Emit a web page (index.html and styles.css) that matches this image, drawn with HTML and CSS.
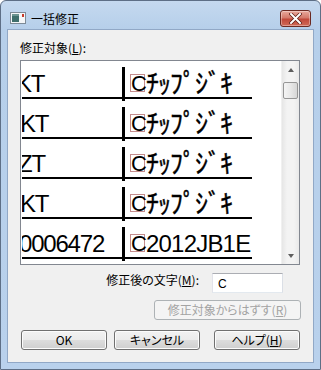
FILE: index.html
```html
<!DOCTYPE html>
<html lang="ja">
<head>
    <meta charset="utf-8">
    <title>一括修正</title>
    <link rel="stylesheet" href="styles.css">
</head>
<body>

<div class="window">
    <div class="titlebar">
        <svg class="app-icon" width="16" height="16" viewBox="0 0 16 16">
            <rect x="0.5" y="2.5" width="15" height="11" fill="#f4f6f8" stroke="#7d8a96"/>
            <rect x="2" y="4" width="7" height="8" fill="#3f6f6c"/>
            <rect x="2" y="4" width="7" height="2" fill="#6d9592"/>
            <rect x="12" y="4" width="2" height="3" fill="#c83a2a"/>
        </svg>
        <span class="title">一括修正</span>
        <button class="close-btn">
            <svg width="13" height="11" viewBox="0 0 13 11">
                <path d="M2 1 L11 10 M11 1 L2 10" stroke="#5a1c14" stroke-width="3.4" stroke-linecap="square"/>
                <path d="M2 1 L11 10 M11 1 L2 10" stroke="#ffffff" stroke-width="2" stroke-linecap="square"/>
            </svg>
        </button>
    </div>

    <div class="client">
        <div class="field-label">修正対象(<u>L</u>):</div>

        <div class="listbox">
            <div class="rows">
                <div class="row">
                    <div class="cell-left"><span class="code shift-lg">KT</span></div>
                    <div class="divider"></div>
                    <div class="cell-right"><span class="mark">C</span><span class="kana">ﾁｯﾌﾟｼﾞｷ</span></div>
                </div>
                <div class="row">
                    <div class="cell-left"><span class="code">KT</span></div>
                    <div class="divider"></div>
                    <div class="cell-right"><span class="mark">C</span><span class="kana">ﾁｯﾌﾟｼﾞｷ</span></div>
                </div>
                <div class="row">
                    <div class="cell-left"><span class="code shift-md">ZT</span></div>
                    <div class="divider"></div>
                    <div class="cell-right"><span class="mark">C</span><span class="kana">ﾁｯﾌﾟｼﾞｷ</span></div>
                </div>
                <div class="row">
                    <div class="cell-left"><span class="code">KT</span></div>
                    <div class="divider"></div>
                    <div class="cell-right"><span class="mark">C</span><span class="kana">ﾁｯﾌﾟｼﾞｷ</span></div>
                </div>
                <div class="row">
                    <div class="cell-left"><span class="code shift-sm">0006472</span></div>
                    <div class="divider"></div>
                    <div class="cell-right"><span class="mark">C</span><span class="latin">2012JB1E</span></div>
                </div>
            </div>
            <div class="scrollbar">
                <div class="sb-btn"><span class="arrow-up"></span></div>
                <div class="sb-thumb"></div>
                <div class="sb-track"></div>
                <div class="sb-btn"><span class="arrow-down"></span></div>
            </div>
        </div>

        <div class="replace-row">
            <label for="newChar">修正後の文字(<u>M</u>):</label>
            <input type="text" id="newChar" value="C">
        </div>

        <div class="remove-row">
            <button class="win-btn remove-btn" disabled>修正対象からはずす(<u>R</u>)</button>
        </div>

        <div class="actions">
            <button class="win-btn">OK</button>
            <button class="win-btn">キャンセル</button>
            <button class="win-btn help-btn">ヘルプ(<u>H</u>)</button>
        </div>
    </div>
</div>

</body>
</html>
```

FILE: styles.css
```css
body {
    margin: 0;
    background: #ffffff;
    font-family: "Noto Sans CJK JP", "Liberation Sans", sans-serif;
    font-size: 12px;
    color: #000;
}

.window {
    width: 321px;
    height: 370px;
    box-sizing: border-box;
    border: 1px solid #5e6f86;
    border-radius: 6px 6px 0 0;
    padding: 0 7px 7px;
    display: flex;
    flex-direction: column;
    background: linear-gradient(to bottom, #c5d9ef 0, #b6cfea 28px, #b9d1ec 100%);
}

/* title bar */
.titlebar {
    height: 29px;
    box-sizing: border-box;
    padding-top: 5px;
    display: flex;
    align-items: center;
}

.app-icon {
    margin-left: 2px;
    flex: none;
}

.title {
    margin-left: 5px;
    flex: 1;
    line-height: 15px;
    color: #000;
}

.close-btn {
    width: 31px;
    height: 17px;
    margin-right: 2px;
    padding: 0;
    border: 1px solid #6b2a22;
    border-radius: 3px;
    background: linear-gradient(to bottom, #e9a99c 0, #d47a6b 45%, #c1493a 55%, #d06a57 100%);
    box-shadow: inset 0 0 0 1px rgba(255, 255, 255, 0.35);
    display: flex;
    align-items: center;
    justify-content: center;
}

/* client area */
.client {
    flex: 1;
    background: #f0f0f0;
    box-shadow: 0 0 0 1px #91a8c6;
    padding: 10px 13px 0 12px;
    display: flex;
    flex-direction: column;
}

.field-label {
    line-height: 15px;
    font-feature-settings: "palt";
}

/* list */
.listbox {
    margin-top: 5px;
    height: 205px;
    box-sizing: border-box;
    border: 1px solid #828790;
    background: #fff;
    display: flex;
    overflow: hidden;
}

.rows {
    flex: 1;
    padding-left: 1px;
    font-family: "Liberation Sans", "Noto Sans CJK JP", sans-serif;
    font-size: 24px;
    line-height: 24px;
    white-space: nowrap;
}

.row {
    height: 40px;
    display: flex;
    align-items: flex-start;
}

.cell-left,
.cell-right {
    height: 38px;
    box-sizing: border-box;
    padding-top: 11px;
    border-bottom: 2px solid #000;
    overflow: hidden;
}

.cell-left {
    width: 100px;
}

.code {
    display: inline-block;
    margin-left: -2px;
    letter-spacing: -1.2px;
}

.shift-sm { margin-left: -3px; }
.shift-md { margin-left: -4px; }
.shift-lg { margin-left: -6px; }

.divider {
    width: 3px;
    height: 34px;
    margin-top: 6px;
    background: #000;
    flex: none;
}

.cell-right {
    width: 127px;
    padding-left: 5px;
}

.mark {
    display: inline-block;
    width: 13px;
    height: 16px;
    margin: 2px 1px 0 0;
    vertical-align: top;
    border: 1px solid #c48c8c;
    font-size: 22px;
    line-height: 17px;
    text-align: center;
}

.kana {
    font-family: "Noto Sans CJK JP", sans-serif;
    font-size: 26px;
    line-height: 20px;
    letter-spacing: -1px;
    -webkit-text-stroke: 0.4px #000;
}

.latin {
    letter-spacing: -0.8px;
}

/* scrollbar */
.scrollbar {
    width: 17px;
    flex: none;
    display: flex;
    flex-direction: column;
    background: linear-gradient(to right, #e6e6e6, #f3f3f3 30%, #f3f3f3 70%, #e9e9e9);
    border-left: 1px solid #f0f0f0;
}

.sb-btn {
    height: 17px;
    display: flex;
    align-items: center;
    justify-content: center;
}

.arrow-up,
.arrow-down {
    width: 0;
    height: 0;
    border-left: 3.5px solid transparent;
    border-right: 3.5px solid transparent;
}

.arrow-up {
    border-bottom: 4px solid #5e5e5e;
}

.arrow-down {
    border-top: 4px solid #5e5e5e;
}

.sb-thumb {
    height: 17px;
    margin: 4px 1px 0;
    box-sizing: border-box;
    border: 1px solid #969696;
    border-radius: 2px;
    background: linear-gradient(to right, #f4f4f4, #e8e8e8 50%, #d6d6d6);
}

.sb-track {
    flex: 1;
}

/* replace field */
.replace-row {
    margin-top: 8px;
    display: flex;
    justify-content: flex-end;
    align-items: flex-start;
    padding-right: 17px;
}

.replace-row label {
    line-height: 15px;
    margin-top: -1px;
    font-feature-settings: "palt";
}

.replace-row input {
    width: 71px;
    height: 20px;
    box-sizing: border-box;
    margin: 0 0 0 13px;
    padding: 1px 5px 0;
    border: 1px solid;
    border-color: #abadb3 #dbdfe6 #e3e9ef #e2e3ea;
    font-family: "Liberation Sans", sans-serif;
    font-size: 12px;
    line-height: 15px;
    vertical-align: top;
    outline: none;
}

/* buttons */
.win-btn {
    height: 20px;
    padding: 0;
    border: 1px solid #707070;
    border-radius: 3px;
    background: linear-gradient(to bottom, #f2f2f2 0, #ebebeb 50%, #dddddd 50%, #cfcfcf 100%);
    box-shadow: inset 0 0 0 1px #fcfcfc;
    font-family: "Noto Sans CJK JP", "Liberation Sans", sans-serif;
    font-size: 12px;
    line-height: 16px;
    color: #000;
    font-feature-settings: "palt";
}

.remove-row {
    margin-top: 7px;
    margin-right: -1px;
    display: flex;
    justify-content: flex-end;
}

.remove-btn {
    width: 147px;
}

.remove-btn:disabled {
    color: #a3a3a3;
    border-color: #adb2b5;
    background: #f4f4f4;
    box-shadow: none;
}

.actions {
    margin-top: 10px;
    margin-left: 1px;
    display: flex;
}

.actions .win-btn {
    width: 86px;
    margin-right: 7px;
}

.actions .help-btn {
    margin-left: 7px;
    margin-right: 0;
}
```
